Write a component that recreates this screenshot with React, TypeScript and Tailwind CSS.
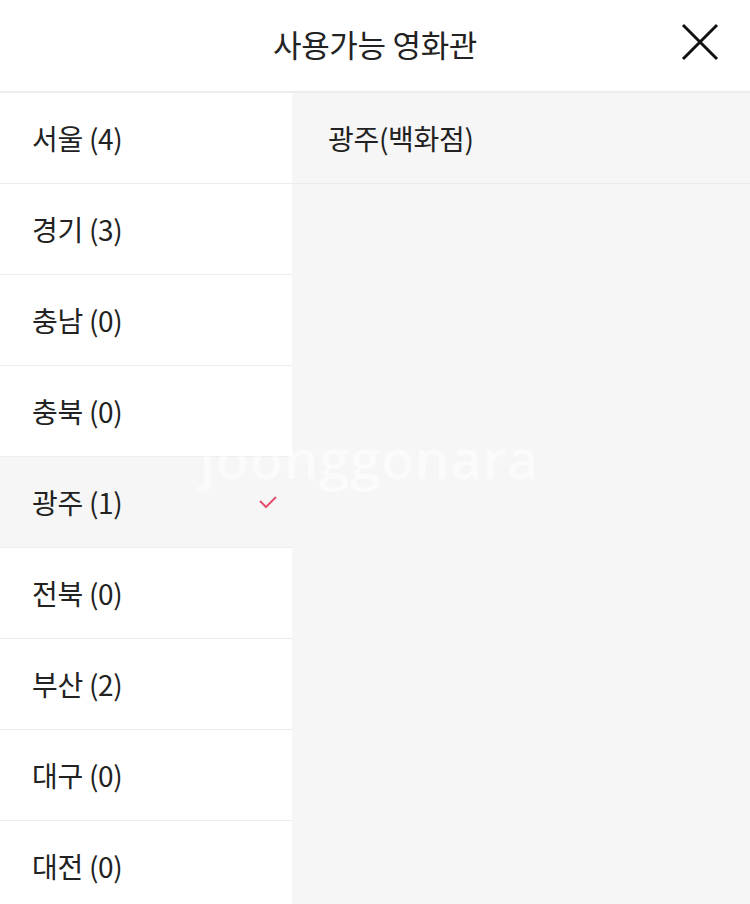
import { useState } from "react"

const regions = [
  { name: "서울", count: 4 },
  { name: "경기", count: 3 },
  { name: "충남", count: 0 },
  { name: "충북", count: 0 },
  { name: "광주", count: 1 },
  { name: "전북", count: 0 },
  { name: "부산", count: 2 },
  { name: "대구", count: 0 },
  { name: "대전", count: 0 },
]

const theaters: Record<string, string[]> = {
  광주: ["광주(백화점)"],
}

const font = { fontFamily: '"Noto Sans CJK KR", "Noto Sans", sans-serif' }

export default function App() {
  const [selected, setSelected] = useState("광주")

  return (
    <div className="relative w-[750px] h-[904px] overflow-hidden bg-white text-[#222]" style={font}>
      <header className="relative flex h-[93px] items-center justify-center border-b-2 border-[#efebee] pb-[5px]">
        <h1 className="text-[31px] leading-none tracking-[-0.3px]">사용가능 영화관</h1>
        <button className="absolute right-[30px] top-[22px] p-0">
          <svg width="40" height="40" viewBox="0 0 40 40" fill="none" stroke="#111" strokeWidth="3">
            <path d="M3 3 L37 37 M37 3 L3 37" />
          </svg>
        </button>
      </header>

      <div className="flex h-[811px]">
        <ul className="w-[292px] shrink-0 bg-white">
          {regions.map((r) => (
            <li
              key={r.name}
              onClick={() => setSelected(r.name)}
              className={`flex h-[91px] items-center justify-between border-b border-[#f0ecee] pl-[32px] pr-[14px] ${
                selected === r.name ? "bg-[#f6f6f6]" : "bg-white"
              }`}
            >
              <span className="text-[28px] leading-none tracking-[-0.3px]">
                {r.name} ({r.count})
              </span>
              {selected === r.name && (
                <svg width="20" height="14" viewBox="0 0 20 14" fill="none" stroke="#e2506f" strokeWidth="2">
                  <path d="M2 6 L8 12 L18 2" />
                </svg>
              )}
            </li>
          ))}
        </ul>

        <ul className="flex-1 bg-[#f6f6f6]">
          {(theaters[selected] ?? []).map((t) => (
            <li key={t} className="flex h-[91px] items-center border-b border-[#ebebeb] pl-[36px]">
              <span className="text-[28px] leading-none tracking-[-0.3px]">{t}</span>
            </li>
          ))}
        </ul>
      </div>

      <div className="pointer-events-none absolute left-[200px] top-[418px] select-none text-[54px] font-semibold tracking-[1px] text-white/50" style={{ fontFamily: '"Open Sans", sans-serif' }}>
        joonggonara
      </div>
    </div>
  )
}
